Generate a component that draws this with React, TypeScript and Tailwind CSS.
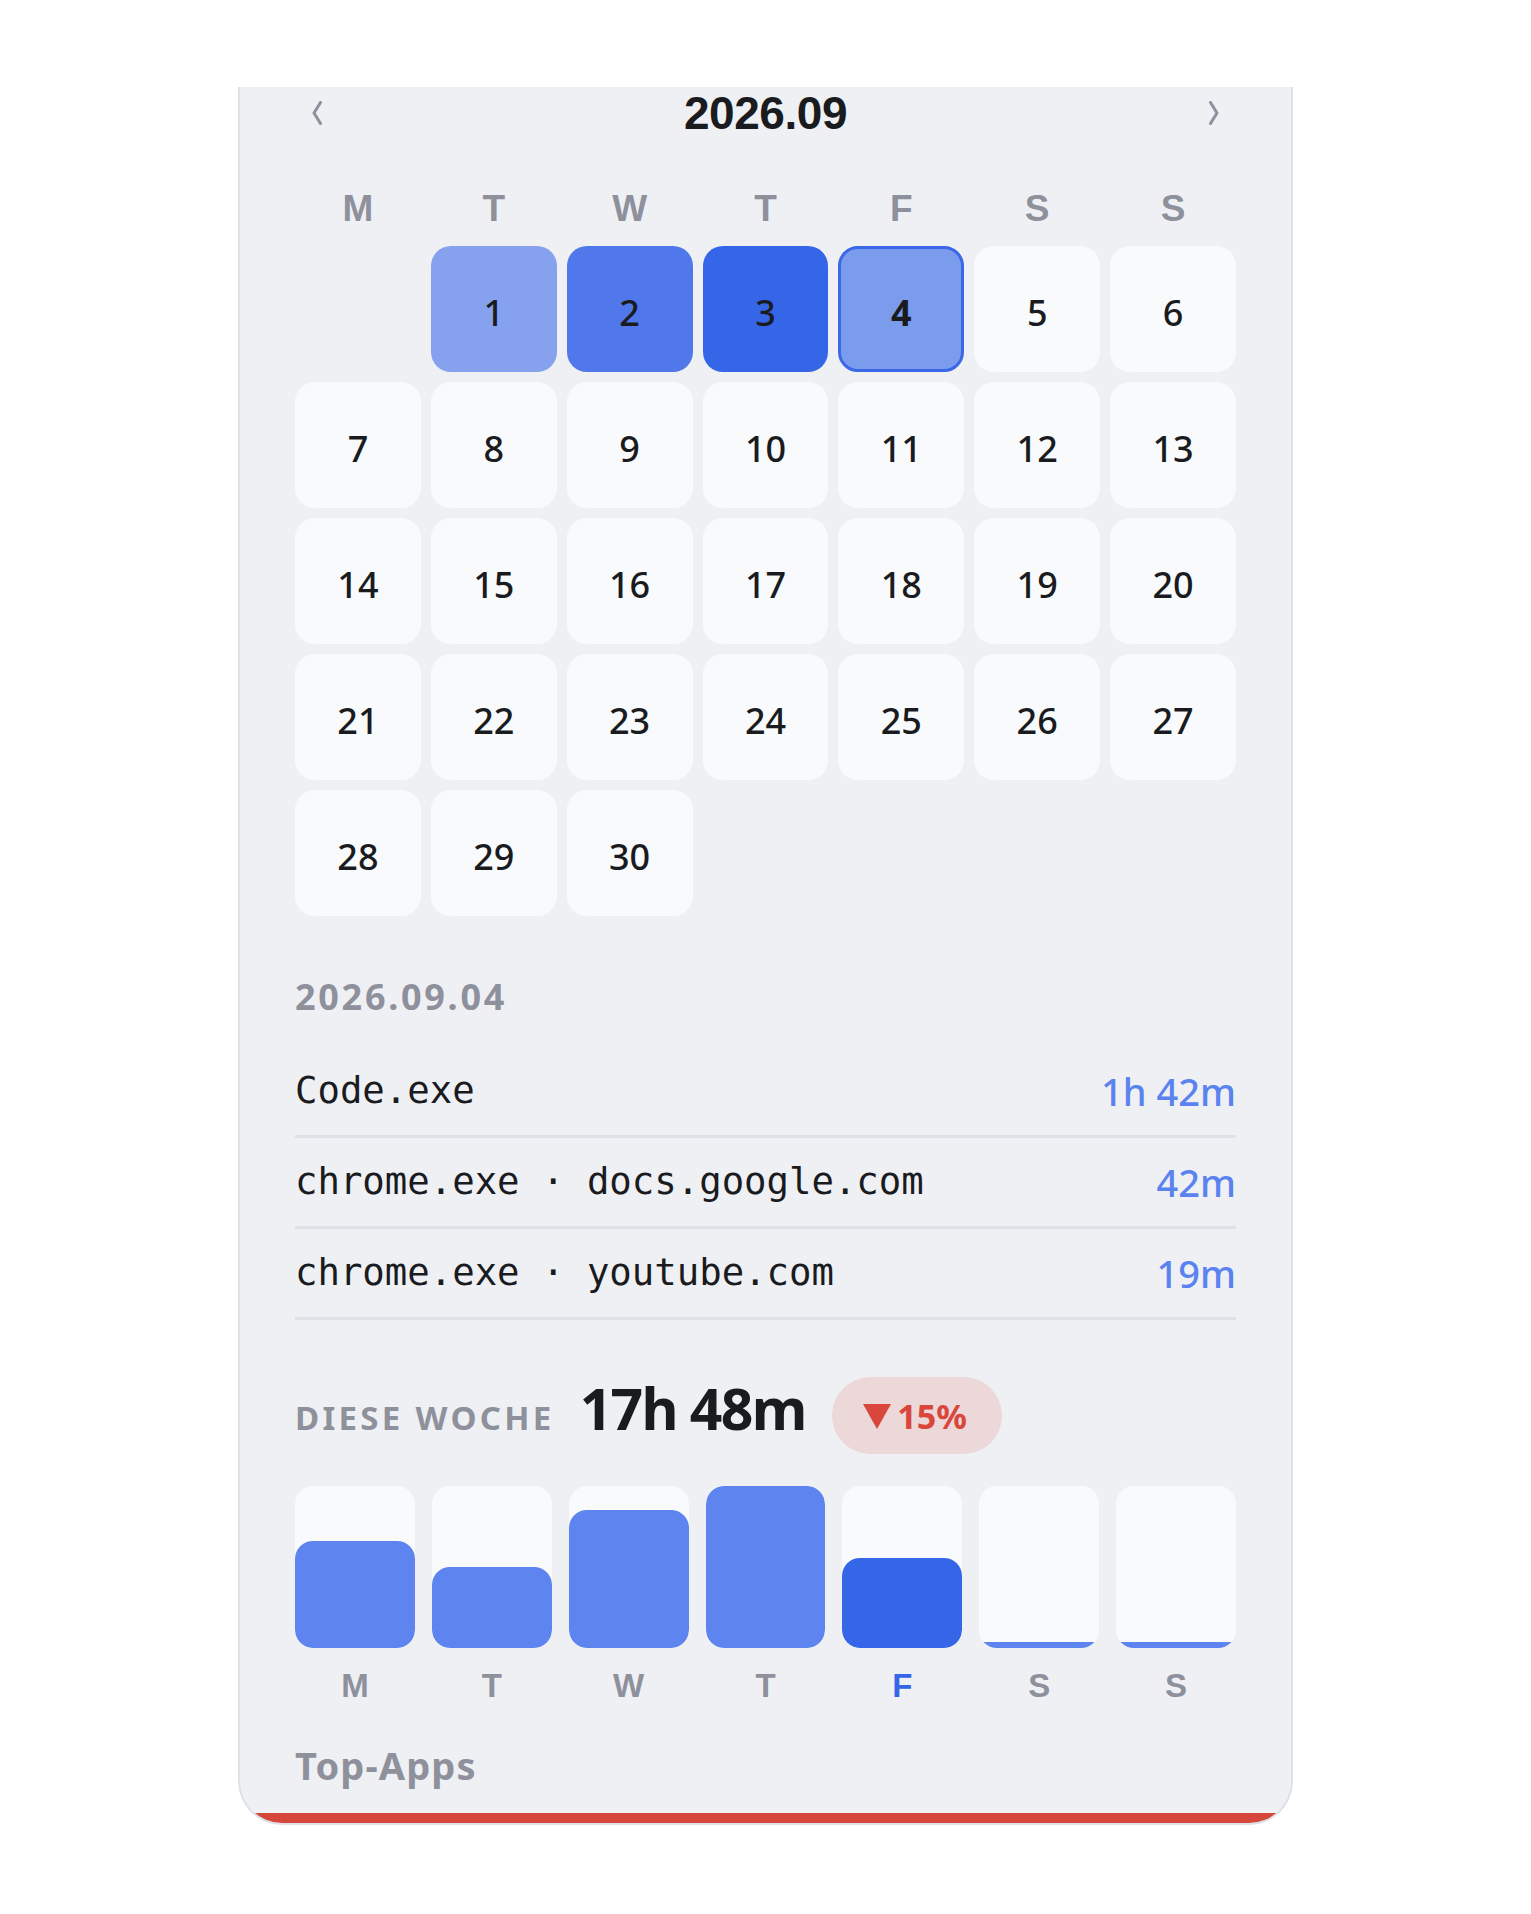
import React from "react";

const WEEKDAYS = ["M", "T", "W", "T", "F", "S", "S"];

// usage intensity per day (only first days of the month have data)
const DAY_BG: Record<number, string> = {
  1: "bg-[#86a2ee]",
  2: "bg-[#5078ea]",
  3: "bg-[#3666e8]",
  4: "bg-[#7b9bec]",
};

const SELECTED = 4;

const ENTRIES = [
  { name: "Code.exe", time: "1h 42m" },
  { name: "chrome.exe · docs.google.com", time: "42m" },
  { name: "chrome.exe · youtube.com", time: "19m" },
];

// bar fill in px of 162
const WEEK = [
  { d: "M", h: 107 },
  { d: "T", h: 81 },
  { d: "W", h: 138 },
  { d: "T", h: 162 },
  { d: "F", h: 90, today: true },
  { d: "S", h: 6 },
  { d: "S", h: 6 },
];

const sans = "font-['Noto_Sans',sans-serif]";
const arial = "font-['Liberation_Sans',Arial,sans-serif]";

function Chevron({ dir }: { dir: "left" | "right" }) {
  return (
    <svg width="12" height="24" viewBox="0 0 12 24" className="text-[#8e919c]">
      <path
        d={dir === "left" ? "M9.5 1.5 L3 12 L9.5 22.5" : "M2.5 1.5 L9 12 L2.5 22.5"}
        fill="none"
        stroke="currentColor"
        strokeWidth={3}
        strokeLinecap="round"
        strokeLinejoin="round"
      />
    </svg>
  );
}

export default function App() {
  const cells: (number | null)[] = [null, ...Array.from({ length: 30 }, (_, i) => i + 1)];

  return (
    <div className="min-h-[1914px] bg-white pt-[87px]">
      <div className="mx-auto flex w-[1055px] flex-col overflow-hidden rounded-b-[44px] border-2 border-t-0 border-[#dfe1e8] bg-[#eff0f4]">
        <div className="px-[55px]">
          {/* Month header */}
          <div className="flex h-[52px] items-center justify-between">
            <button type="button" className="flex h-[44px] w-[44px] items-center justify-center">
              <Chevron dir="left" />
            </button>
            <span className={`${arial} text-[46px] font-bold leading-none tracking-[-0.01em] text-[#1a1b1f]`}>
              2026.09
            </span>
            <button type="button" className="flex h-[44px] w-[44px] items-center justify-center">
              <Chevron dir="right" />
            </button>
          </div>

          {/* Weekday labels */}
          <div className="mt-[49px] grid h-[40px] grid-cols-7 gap-[10px]">
            {WEEKDAYS.map((d, i) => (
              <div key={i} className={`${arial} flex items-center justify-center text-[37px] font-bold leading-none text-[#8e919c]`}>
                {d}
              </div>
            ))}
          </div>

          {/* Days */}
          <div className="mt-[18px] grid grid-cols-7 gap-[10px]">
            {cells.map((n, i) =>
              n === null ? (
                <div key={i} className="h-[126px]" />
              ) : (
                <div
                  key={i}
                  className={[
                    "flex h-[126px] items-center justify-center rounded-[20px] pt-[7px] text-[36px] leading-none text-[#1a1b1f]",
                    sans,
                    DAY_BG[n] ?? "bg-[#f9fafb]",
                    n === SELECTED ? "border-[3px] border-[#3a68e6] font-bold" : "font-medium",
                  ].join(" ")}
                >
                  {n}
                </div>
              )
            )}
          </div>

          {/* Selected day */}
          <div className={`${sans} mt-[56px] flex h-[50px] items-center text-[36px] font-bold tracking-[0.075em] text-[#8e919c]`}>
            2026.09.04
          </div>

          <div className="mt-[25px]">
            {ENTRIES.map((e) => (
              <div key={e.name} className="flex h-[91px] items-center justify-between border-b-[3px] border-[#e0e1e7]">
                <span className="font-['DejaVu_Sans_Mono',monospace] text-[37.3px] leading-none text-[#1a1b1f]">
                  {e.name}
                </span>
                <span className={`${sans} text-[38px] font-medium leading-none text-[#5b83ef]`}>{e.time}</span>
              </div>
            ))}
          </div>

          {/* This week */}
          <div className="mt-[57px] flex h-[77px] items-center">
            <div className="mb-[14px] flex items-baseline">
              <span className={`${sans} text-[33px] font-bold uppercase leading-none tracking-[0.1em] text-[#8e919c]`}>
                Diese Woche
              </span>
              <span className={`${sans} ml-[25px] text-[57px] font-bold leading-none tracking-[-0.03em] text-[#1a1b1f]`}>
                17h 48m
              </span>
            </div>
            <span
              className={`${sans} ml-[26px] flex h-[77px] w-[170px] items-center justify-center gap-[5px] rounded-full bg-[#ecd8d9] pr-[4px] text-[34px] font-bold leading-none text-[#d8463c]`}
            >
              <svg width="30" height="28" viewBox="0 0 30 28">
                <path d="M1 2 H29 L15 27 Z" fill="currentColor" />
              </svg>
              15%
            </span>
          </div>

          <div className="mt-[32px] grid h-[162px] grid-cols-7 gap-[17px]">
            {WEEK.map((w, i) => (
              <div key={i} className="flex flex-col justify-end overflow-hidden rounded-[18px] bg-[#f9fafb]">
                <div
                  className={`${w.today ? "bg-[#3566e8]" : "bg-[#5d84ef]"} w-full rounded-[18px]`}
                  style={{ height: w.h }}
                />
              </div>
            ))}
          </div>

          <div className="mt-[19px] grid h-[36px] grid-cols-7 gap-[17px]">
            {WEEK.map((w, i) => (
              <div
                key={i}
                className={`${arial} flex items-center justify-center text-[33px] font-bold leading-none ${w.today ? "text-[#3566e8]" : "text-[#8e919c]"}`}
              >
                {w.d}
              </div>
            ))}
          </div>

          <div className={`${sans} mt-[37px] flex h-[50px] items-center text-[38px] font-bold tracking-[0.03em] text-[#8e919c]`}>
            Top-Apps
          </div>
        </div>

        <div className="mt-[23px] h-[10px] bg-[#d6473b]" />
      </div>
    </div>
  );
}
